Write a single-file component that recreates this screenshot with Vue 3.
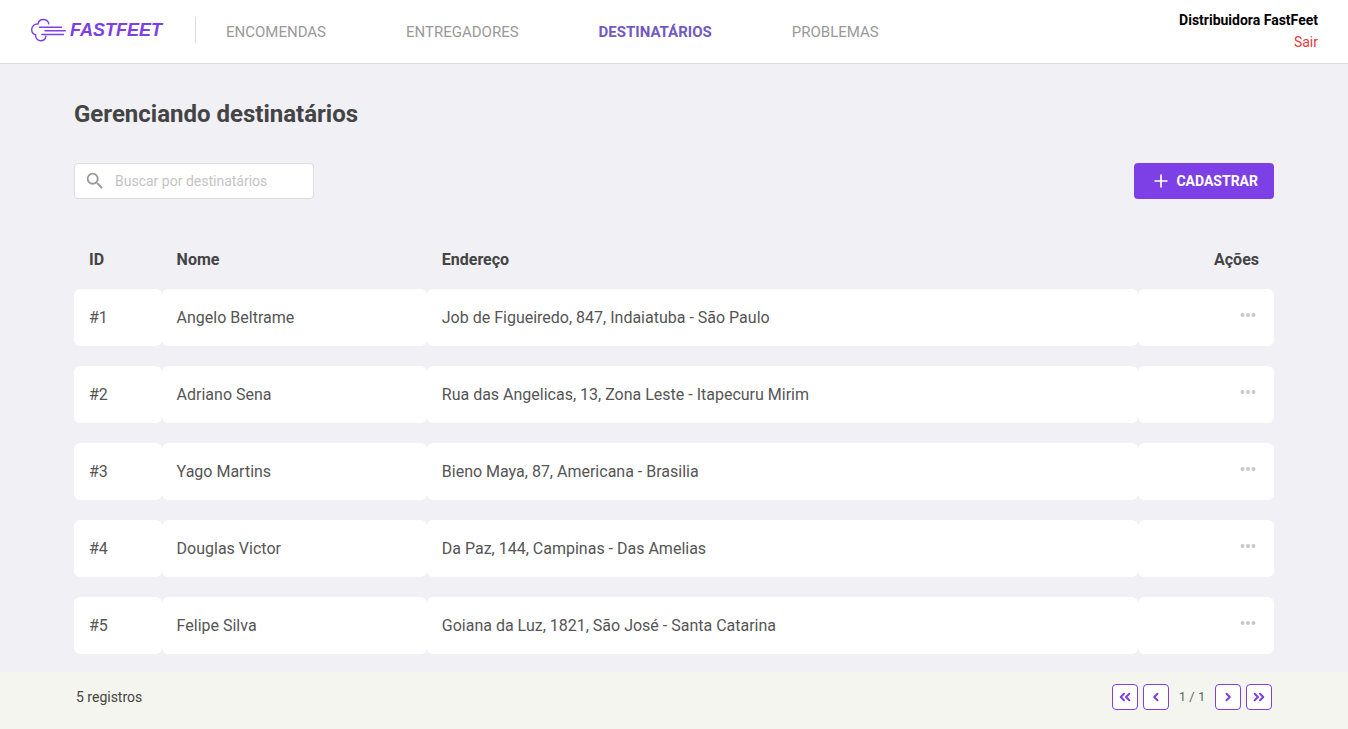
<script setup>
import { ref, computed } from 'vue'

const links = [
  { label: 'ENCOMENDAS', active: false },
  { label: 'ENTREGADORES', active: false },
  { label: 'DESTINATÁRIOS', active: true },
  { label: 'PROBLEMAS', active: false },
]

const recipients = [
  { id: 1, name: 'Angelo Beltrame', address: 'Job de Figueiredo, 847, Indaiatuba - São Paulo' },
  { id: 2, name: 'Adriano Sena', address: 'Rua das Angelicas, 13, Zona Leste - Itapecuru Mirim' },
  { id: 3, name: 'Yago Martins', address: 'Bieno Maya, 87, Americana - Brasilia' },
  { id: 4, name: 'Douglas Victor', address: 'Da Paz, 144, Campinas - Das Amelias' },
  { id: 5, name: 'Felipe Silva', address: 'Goiana da Luz, 1821, São José - Santa Catarina' },
]

const search = ref('')
const filtered = computed(() =>
  recipients.filter((r) => r.name.toLowerCase().includes(search.value.toLowerCase()))
)
</script>

<template>
  <div class="page">
    <header class="topbar">
      <a href="#" class="logo">
        <svg class="logo-mark" viewBox="0 0 36 24" width="36" height="24" aria-hidden="true">
          <g fill="none" stroke="currentColor" stroke-width="1.4" stroke-linecap="round" stroke-linejoin="round">
            <path d="M18.8 5.8C18.200 3.200 16 1.500 13.300 1.500C10.500 1.500 8.500 3.300 8 6C4.300 5.700 1.700 8.200 1.700 11.500C1.700 14.300 3.200 16.200 5.700 16.900C5.200 20 7.300 22.500 10.300 22.700C13.200 22.800 15.500 20.900 15.900 18.300" />
            <path d="M9.500 9.200H31.500M15 12.800H35.300M11.800 16.500H33.500" />
          </g>
        </svg>
        <span class="logo-text">FASTFEET</span>
      </a>
      <nav class="nav">
        <a v-for="l in links" :key="l.label" href="#" :class="{ active: l.active }">{{ l.label }}</a>
      </nav>
      <div class="profile">
        <strong>Distribuidora FastFeet</strong>
        <button type="button">Sair</button>
      </div>
    </header>

    <main class="content">
      <h1>Gerenciando destinatários</h1>
      <div class="tools">
        <label class="search">
          <svg viewBox="0 0 24 24" width="22" height="22" aria-hidden="true">
            <path fill="currentColor" d="M15.500 14h-.79l-.28-.27A6.471 6.471 0 0 0 16 9.500 6.500 6.500 0 1 0 9.500 16c1.610 0 3.090-.59 4.230-1.570l.27.28v.79l5 4.990L20.490 19l-4.990-5zm-6 0C7.010 14 5 11.990 5 9.500S7.010 5 9.500 5 14 7.010 14 9.500 11.990 14 9.500 14z" />
          </svg>
          <input v-model="search" type="text" placeholder="Buscar por destinatários" aria-label="Buscar por destinatários" />
        </label>
        <button type="button" class="create">
          <svg viewBox="0 0 14 14" width="14" height="14" aria-hidden="true">
            <path d="M7 0.500V13.500M0.500 7H13.500" stroke="currentColor" stroke-width="1.700" />
          </svg>
          <span>CADASTRAR</span>
        </button>
      </div>

      <table>
        <thead>
          <tr>
            <th class="col-id">ID</th>
            <th class="col-name">Nome</th>
            <th>Endereço</th>
            <th class="col-actions">Ações</th>
          </tr>
        </thead>
        <tbody>
          <tr v-for="r in filtered" :key="r.id">
            <td>#{{ r.id }}</td>
            <td>{{ r.name }}</td>
            <td>{{ r.address }}</td>
            <td class="col-actions">
              <button type="button" class="more" :aria-label="`Ações de ${r.name}`">
                <svg viewBox="0 0 16 4" width="16" height="4" aria-hidden="true">
                  <g fill="currentColor"><circle cx="2.500" cy="2" r="1.900" /><circle cx="8" cy="2" r="1.900" /><circle cx="13.500" cy="2" r="1.900" /></g>
                </svg>
              </button>
            </td>
          </tr>
        </tbody>
      </table>
    </main>

    <footer class="footer">
      <div class="footer-inner">
        <span>{{ filtered.length }} registros</span>
        <div class="pager">
          <button type="button" aria-label="Primeira página">
            <svg viewBox="0 0 14 14" width="14" height="14"><path d="M6 3.700L2.700 7L6 10.300M11.300 3.700L8 7L11.300 10.300" /></svg>
          </button>
          <button type="button" aria-label="Página anterior">
            <svg viewBox="0 0 14 14" width="14" height="14"><path d="M8.500 3.700L5.200 7L8.500 10.300" /></svg>
          </button>
          <span class="pages">1 / 1</span>
          <button type="button" aria-label="Próxima página">
            <svg viewBox="0 0 14 14" width="14" height="14"><path d="M5.500 3.700L8.800 7L5.500 10.300" /></svg>
          </button>
          <button type="button" aria-label="Última página">
            <svg viewBox="0 0 14 14" width="14" height="14"><path d="M2.700 3.700L6 7L2.700 10.300M8 3.700L11.300 7L8 10.300" /></svg>
          </button>
        </div>
      </div>
    </footer>
  </div>
</template>

<style>
body {
  background: #f0f0f5;
}
</style>

<style scoped>
.page {
  display: flex;
  flex-direction: column;
  min-height: 100vh;
  font-family: Roboto, "Liberation Sans", sans-serif;
  font-size: 16px;
  color: #444;
}
.page * {
  box-sizing: border-box;
}
button,
input {
  font: inherit;
  margin: 0;
}
button {
  cursor: pointer;
}
svg {
  display: block;
}
a {
  text-decoration: none;
}
.topbar {
  display: flex;
  align-items: center;
  height: 64px;
  padding: 0 30px;
  background: #fff;
  border-bottom: 1px solid #ddd;
}
.logo {
  display: flex;
  align-items: center;
  gap: 4px;
  height: 26px;
  width: 166px;
  margin-bottom: 4px;
  border-right: 1px solid #ddd;
  color: #7d40e7;
}
.logo-text {
  font: italic bold 18px/24px "Liberation Sans", sans-serif;
}
.nav {
  display: flex;
  gap: 80px;
  flex: 1;
  margin-left: 30px;
  font-size: 15px;
}
.nav a {
  color: #999;
}
.nav a.active {
  color: #7159c1;
  font-weight: bold;
}
.profile {
  display: flex;
  flex-direction: column;
  align-items: flex-end;
  gap: 6px;
  padding-bottom: 2px;
  font-size: 14px;
  line-height: 16px;
}
.profile strong {
  color: #000;
}
.profile button {
  padding: 0;
  border: 0;
  background: none;
  color: #de3b3b;
}
.content {
  flex: 1;
  width: 100%;
  max-width: 1200px;
  margin: 0 auto;
}
h1 {
  margin: 35px 0 0;
  font-size: 24px;
  line-height: 30px;
}
.tools {
  display: flex;
  justify-content: space-between;
  margin-top: 34px;
}
.search {
  display: flex;
  align-items: center;
  gap: 9px;
  width: 240px;
  height: 36px;
  padding: 0 9px;
  border: 1px solid #ddd;
  border-radius: 4px;
  background: #fff;
  color: #999;
}
.search input {
  flex: 1;
  min-width: 0;
  padding: 0;
  border: 0;
  outline: 0;
  background: none;
  color: #444;
  font-size: 14px;
}
.search input::placeholder {
  color: #c4c4c4;
}
.create {
  display: flex;
  align-items: center;
  gap: 8px;
  height: 36px;
  padding: 0 16px 0 20px;
  border: 0;
  border-radius: 4px;
  background: #7d40e7;
  color: #fff;
  font-size: 14px;
  font-weight: bold;
}
table {
  width: 100%;
  margin-top: 31px;
  margin-bottom: -4px;
  table-layout: fixed;
  border-collapse: separate;
  border-spacing: 0 20px;
}
th {
  height: 19px;
  padding: 0 15px;
  text-align: left;
}
.col-id {
  width: 7.3%;
}
.col-name {
  width: 22.1%;
}
th.col-actions {
  width: 11.3%;
}
.col-actions {
  text-align: right;
}
td {
  height: 57px;
  padding: 0 15px;
  background: #fff;
  border-radius: 6px;
  color: #555;
}
.more {
  padding: 4px 3px 10px;
  border: 0;
  background: none;
  color: #c6c6c6;
  vertical-align: middle;
}
.footer {
  background: #f4f5ee;
}
.footer-inner {
  display: flex;
  justify-content: space-between;
  align-items: center;
  width: 100%;
  max-width: 1200px;
  height: 57px;
  margin: 0 auto;
  padding: 0 2px 8px;
  font-size: 14px;
}
.pager {
  display: flex;
  align-items: center;
  gap: 5px;
}
.pager button {
  display: flex;
  align-items: center;
  justify-content: center;
  width: 26px;
  height: 26px;
  padding: 0;
  border: 1px solid #7d40e7;
  border-radius: 4px;
  background: #fff;
  color: #7d40e7;
}
.pager path {
  fill: none;
  stroke: currentColor;
  stroke-width: 2;
  stroke-linecap: round;
  stroke-linejoin: round;
}
.pages {
  width: 36px;
  text-align: center;
  font-size: 13px;
  color: #666;
}
</style>
